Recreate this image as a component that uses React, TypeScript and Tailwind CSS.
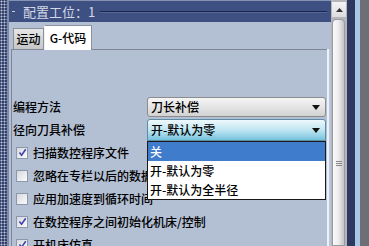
import React from 'react';

const FONT = "font-['Noto_Sans_CJK_SC','Noto_Sans',sans-serif]";

const CHECK_ROWS = [
  { label: '扫描数控程序文件', checked: true },
  { label: '忽略在专栏以后的数据', checked: false },
  { label: '应用加速度到循环时间', checked: false },
  { label: '在数控程序之间初始化机床/控制', checked: true },
  { label: '开机床仿真', checked: true },
];

const LIST_ITEMS = ['关', '开-默认为零', '开-默认为全半径'];

const Arrow = () => (
  <svg viewBox="0 0 8 5" className="w-[8px] h-[5px] shrink-0">
    <path d="M0 0 H8 L4 5 Z" fill="#111" />
  </svg>
);

const CheckBox = ({ checked }: { checked: boolean }) => (
  <div className="w-[12px] h-[12px] shrink-0 border border-[#8d97aa] bg-gradient-to-br from-[#d6d8de] to-[#fbfbfb] flex items-center justify-center">
    {checked && (
      <svg viewBox="0 0 10 10" className="w-[9px] h-[9px]">
        <path d="M1.6 5 L4 8 L8.6 1.4" stroke="#3c3fae" strokeWidth="1.7" fill="none" />
      </svg>
    )}
  </div>
);

export default function App() {
  return (
    <div className={`flex w-[369px] h-[246px] overflow-hidden bg-[#b3bfd3] text-black ${FONT}`}>
      {/* dotted frame edge */}
      <div className="w-[7px] bg-[#33406a] bg-[radial-gradient(circle,#b8c2da_0.9px,transparent_1.1px)] bg-[length:3px_3px]" />
      <div className="w-[2px] bg-[#7e8bab]" />

      {/* main column */}
      <div className="w-[322px] flex flex-col">
        {/* title bar */}
        <div className="h-[22px] shrink-0 flex items-center bg-[#3e5082] border-t border-[#8592b2]">
          <div className="ml-[3px] w-[3px] h-[1px] bg-[#c8cee0]" />
          <span className="ml-[8px] text-[13px] leading-none text-[#d3d8e6]">配置工位：1</span>
          <div className="ml-[5px] mr-[4px] flex-1 h-[2px] border-t border-[#1b2547] border-b border-b-[#55669a]" />
        </div>

        {/* tabs */}
        <div className="h-[27px] shrink-0 flex items-end pl-[4px] font-medium">
          <div className="w-[31px] h-[21px] border border-b-0 border-[#8a909c] bg-gradient-to-b from-[#e6e6e6] to-[#c6c6c8] flex items-center justify-center text-[12px] leading-none">
            运动
          </div>
          <div className="relative z-10 -mb-[1px] w-[48px] h-[25px] border border-b-0 border-[#8a909c] border-l-[#f0f0f0] bg-white flex items-center justify-center text-[12px] leading-none">
            G-代码
          </div>
        </div>

        {/* content */}
        <div className="flex-1 flex">
          <div className="relative ml-[2px] w-[316px] border-t border-l border-[#7f8698] pt-[47px] pr-[1px] text-[12px] leading-none font-medium">
            <div className="h-[20px] flex items-center">
              <div className="w-[135px] pl-[1px]">编程方法</div>
              <div className="w-[179px] h-[20px] rounded-[3px] border border-[#8c8c8c] bg-gradient-to-b from-[#f6f6f6] to-[#d2d2d2] flex items-center pl-[3px] pr-[5px]">
                <span className="flex-1">刀长补偿</span>
                <Arrow />
              </div>
            </div>
            <div className="mt-[2px] h-[22px] flex items-center">
              <div className="w-[135px] pl-[1px]">径向刀具补偿</div>
              <div className="w-[179px] h-[22px] rounded-t-[3px] border border-[#5d8da4] bg-gradient-to-b from-[#eef9fc] via-[#bfe6f2] to-[#74c2dc] flex items-center pl-[3px] pr-[5px]">
                <span className="flex-1">开-默认为零</span>
                <Arrow />
              </div>
            </div>

            {CHECK_ROWS.map((row) => (
              <div key={row.label} className="h-[23px] flex items-center gap-[5px] pl-[4px] whitespace-nowrap">
                <CheckBox checked={row.checked} />
                <span>{row.label}</span>
              </div>
            ))}

            {/* open dropdown list */}
            <div className="absolute left-[135px] top-[91px] w-[179px] border border-[#1a1a1a] bg-white z-20">
              {LIST_ITEMS.map((item, i) => (
                <div
                  key={item}
                  className={`h-[19px] flex items-center pl-[2px] ${i === 0 ? 'bg-[#3f7ccb] text-white' : ''}`}
                >
                  {item}
                </div>
              ))}
            </div>
          </div>
          <div className="w-[2px] bg-[#eef2f8]" />
          <div className="w-[2px] bg-[#b6c6de]" />
        </div>
      </div>

      {/* scrollbar */}
      <div className="w-[16px] flex flex-col bg-[#b4b6bc] pt-[2px]">
        <div className="h-[15px] shrink-0 mx-[1px] bg-gradient-to-b from-[#f4f4f6] to-[#dcdce0] flex items-center justify-center">
          <svg viewBox="0 0 7 4" className="w-[7px] h-[4px]">
            <path d="M0 4 H7 L3.5 0 Z" fill="#333" />
          </svg>
        </div>
        <div className="mt-[2px] ml-[1px] w-[13px] flex-1 rounded-t-[4px] border border-[#9a9aa0] bg-gradient-to-r from-[#fafafa] via-[#ececec] to-[#c4c4c8] flex flex-col items-center pt-[141px]">
          <div className="w-[6px] h-[1px] bg-[#888]" />
          <div className="mt-[1px] w-[6px] h-[1px] bg-[#888]" />
          <div className="mt-[1px] w-[6px] h-[1px] bg-[#888]" />
        </div>
      </div>

      {/* window edges */}
      <div className="w-[8px] bg-[#2d3960]" />
      <div className="w-[5px] bg-[#a9c6e4]" />
      <div className="w-[9px] bg-[#6e6e76]" />
    </div>
  );
}
